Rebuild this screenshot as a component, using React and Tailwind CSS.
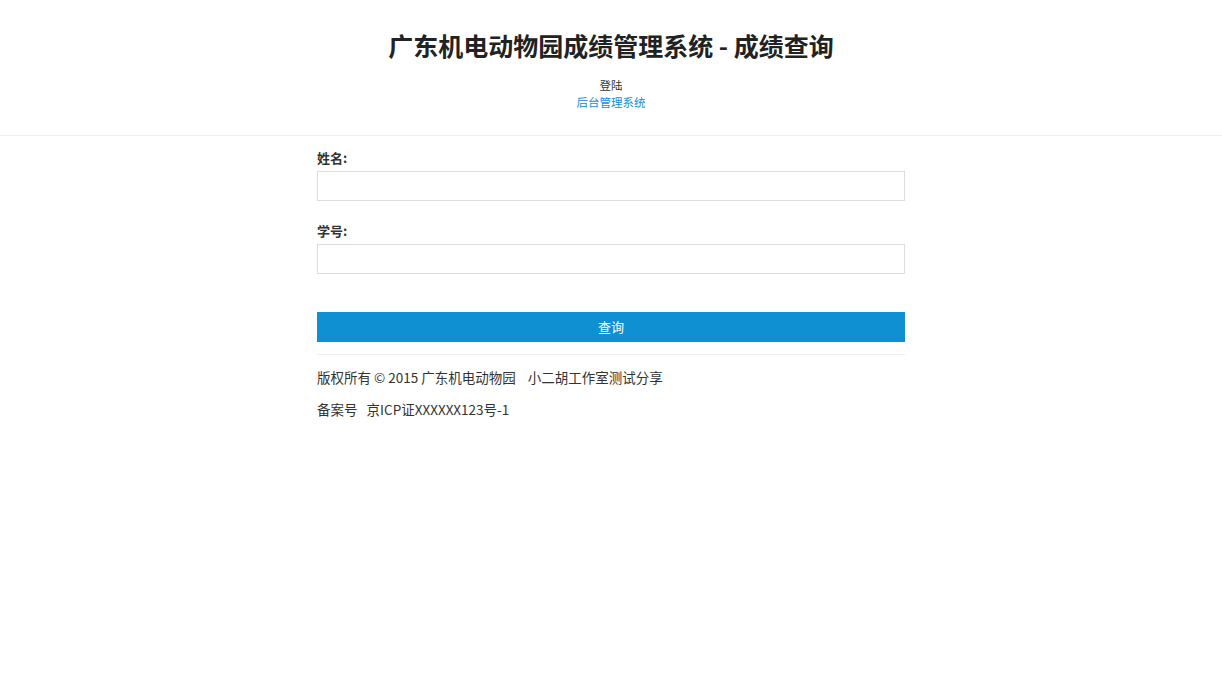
import React from 'react';

const font = { fontFamily: '"Noto Sans CJK SC", "Noto Sans", sans-serif' };

const Field = ({ label, className = '' }) => (
  <div className={className}>
    <label className="block text-[13px] leading-[20px] font-bold text-[#333] mb-[3px]">{label}</label>
    <input type="text" className="block w-full h-[30px] border border-[#ddd] bg-white outline-none px-2 text-[13px]" />
  </div>
);

export default function App() {
  return (
    <div className="min-h-screen bg-white text-[#333]" style={font}>
      {/* header */}
      <div className="text-center pt-[30px] pb-[24px] border-b border-[#eee]">
        <h1 className="text-[25px] leading-[30px] font-bold text-[#222]">广东机电动物园成绩管理系统 - 成绩查询</h1>
        <div className="mt-[16px] text-[11.5px] leading-[18px] text-[#333]">登陆</div>
        <a href="#" className="block text-[11.5px] leading-[17px] text-[#0e90d2]">后台管理系统</a>
      </div>

      <div className="w-[588px] mx-auto pt-[12px]">
        <form onSubmit={(e) => e.preventDefault()}>
          <Field label="姓名:" />
          <Field label="学号:" className="mt-[20px]" />
          <button type="submit" className="mt-[38px] w-full h-[30px] bg-[#0e90d2] text-white text-[13px] leading-[30px]">
            查询
          </button>
        </form>
        <hr className="mt-[12px] border-0 border-t border-[#eee]" />
        <div className="mt-[12px] text-[13.5px] leading-[20px] text-[#333]">
          <p>版权所有 © 2015 广东机电动物园 &nbsp;&nbsp;&nbsp;小二胡工作室测试分享</p>
          <p className="mt-[12px]">备案号 &nbsp;&nbsp;京ICP证XXXXXX123号-1</p>
        </div>
      </div>
    </div>
  );
}
